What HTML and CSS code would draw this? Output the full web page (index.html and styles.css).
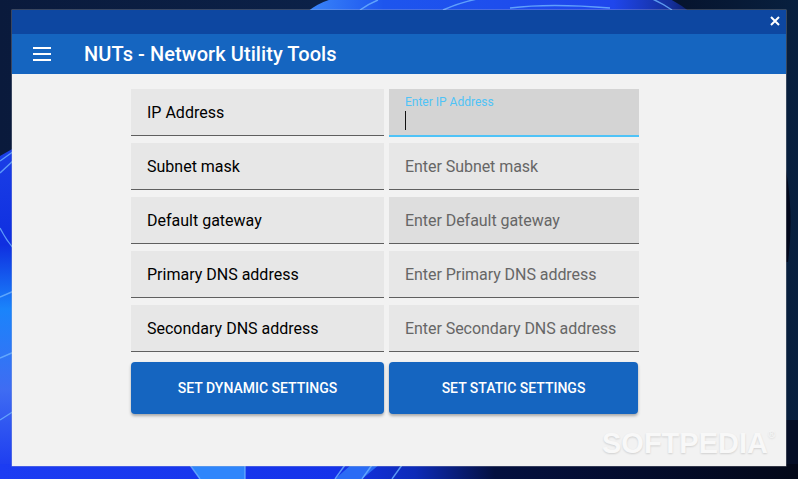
FILE: index.html
```html
<!DOCTYPE html>
<html lang="en">
<head>
<meta charset="utf-8">
<title>NUTs - Network Utility Tools</title>
<link rel="stylesheet" href="styles.css">
</head>
<body>
<svg class="wallpaper" viewBox="0 0 798 479" xmlns="http://www.w3.org/2000/svg" aria-hidden="true">
  <defs>
    <linearGradient id="dark" x1="0" y1="0" x2="1" y2="0">
      <stop offset="0" stop-color="#0a1a3c"/>
      <stop offset="0.4" stop-color="#0b2148"/>
      <stop offset="0.85" stop-color="#06142e"/>
      <stop offset="1" stop-color="#08203f"/>
    </linearGradient>
    <linearGradient id="left" x1="0" y1="0" x2="0" y2="1">
      <stop offset="0" stop-color="#1b3fe6"/>
      <stop offset="0.3" stop-color="#0f2fe0"/>
      <stop offset="0.5" stop-color="#1a84fb"/>
      <stop offset="0.75" stop-color="#3f6cf2"/>
      <stop offset="1" stop-color="#1c3bf0"/>
    </linearGradient>
    <linearGradient id="bottom" x1="0" y1="0" x2="1" y2="0">
      <stop offset="0" stop-color="#1c3cf2"/>
      <stop offset="0.42" stop-color="#1533ea"/>
      <stop offset="0.52" stop-color="#0d2bb8"/>
      <stop offset="0.62" stop-color="#04103f"/>
      <stop offset="1" stop-color="#030818"/>
    </linearGradient>
    <linearGradient id="top" x1="0" y1="0" x2="1" y2="0">
      <stop offset="0" stop-color="#3a86fa"/>
      <stop offset="0.2" stop-color="#1d55ee"/>
      <stop offset="0.8" stop-color="#1f46ec"/>
      <stop offset="0.95" stop-color="#142f9a"/>
      <stop offset="1" stop-color="#0b1f6a"/>
    </linearGradient>
  </defs>
  <rect width="798" height="479" fill="url(#dark)"/>
  <rect x="786" y="420" width="12" height="59" fill="#050e26"/>
  <path d="M786 170 Q794 215 788 262 L786 262 Z" fill="#02081c"/>
  <path d="M0 156 L14 148 V470 H0 Z" fill="url(#left)"/>
  <rect y="464" width="798" height="15" fill="url(#bottom)"/>
  <path d="M190 464 L200 479 H245 V464 Z" fill="#2f86fb"/>
  <path d="M352 464 L335 479 H362 L380 464 Z" fill="#2a6cf5"/>
  <path d="M307 12 Q322 0 338 -2 L668 -2 Q680 4 690 12 Z" fill="url(#top)"/>
  <g class="streak">
    <path d="M0 161 L14 151"/>
    <path d="M0 173 L14 160"/>
    <path d="M0 228 Q6 240 14 249"/>
    <path d="M0 297 L14 291"/>
    <path d="M0 358 L14 352"/>
    <path d="M0 420 L14 411"/>
    <path d="M190 465 L200 479"/>
    <path d="M245 465 V479"/>
    <path d="M345 465 L335 479"/>
    <path d="M372 465 L362 479"/>
    <path d="M402 465 L392 479"/>
    <path d="M360 10 Q368 4 378 0"/>
    <path d="M443 10 Q465 0 490 -3"/>
    <path d="M510 8 Q550 3 610 8"/>
    <path d="M650 -2 Q662 3 672 10"/>
  </g>
</svg>

<main class="window">
  <div class="titlebar">
    <svg class="close-icon" viewBox="0 0 10 10" xmlns="http://www.w3.org/2000/svg" aria-hidden="true">
      <path d="M1 1 L9 9 M9 1 L1 9"/>
    </svg>
  </div>
  <header class="appbar">
    <svg class="menu-icon" viewBox="0 0 18 14" xmlns="http://www.w3.org/2000/svg" aria-hidden="true">
      <path d="M0 1 H18 M0 7 H18 M0 13 H18"/>
    </svg>
    <h1 class="app-title">NUTs - Network Utility Tools</h1>
  </header>
  <section class="content">
    <div class="form">
      <div class="cell label">IP Address</div>
      <div class="cell input focused">
        <span class="float-label">Enter IP Address</span>
        <span class="caret"></span>
      </div>
      <div class="cell label">Subnet mask</div>
      <div class="cell input">Enter Subnet mask</div>
      <div class="cell label">Default gateway</div>
      <div class="cell input hovered">Enter Default gateway</div>
      <div class="cell label">Primary DNS address</div>
      <div class="cell input">Enter Primary DNS address</div>
      <div class="cell label">Secondary DNS address</div>
      <div class="cell input">Enter Secondary DNS address</div>
      <button class="btn btn-left" type="button">SET DYNAMIC SETTINGS</button>
      <button class="btn btn-right" type="button">SET STATIC SETTINGS</button>
    </div>
    <div class="watermark">SOFTPEDIA<sup class="reg">®</sup></div>
  </section>
</main>
</body>
</html>
```

FILE: styles.css
```css
* {
  box-sizing: border-box;
}

html,
body {
  margin: 0;
  height: 100%;
  overflow: hidden;
}

body {
  position: relative;
  width: 798px;
  height: 479px;
  font-family: Roboto, "Liberation Sans", sans-serif;
}

.wallpaper {
  position: absolute;
  inset: 0;
  width: 798px;
  height: 479px;
  display: block;
}

.streak path {
  fill: none;
  stroke: #6fb4ff;
  stroke-width: 1.4;
  opacity: 0.8;
}

.window {
  position: absolute;
  left: 12px;
  top: 10px;
  width: 774px;
  height: 456px;
  display: flex;
  flex-direction: column;
  background: #f2f2f2;
  box-shadow: 0 0 0 0.5px rgba(200, 200, 200, 0.5);
}

.titlebar {
  flex: 0 0 24px;
  display: flex;
  align-items: center;
  justify-content: flex-end;
  padding: 0 6px 2px 0;
  background: #0d47a1;
}

.close-icon {
  width: 10px;
  height: 10px;
  fill: none;
  stroke: #fff;
  stroke-width: 2;
}

.appbar {
  flex: 0 0 40px;
  display: flex;
  align-items: center;
  gap: 33px;
  padding-left: 21px;
  background: #1565c0;
}

.menu-icon {
  flex: none;
  width: 18px;
  height: 14px;
  fill: none;
  stroke: #fff;
  stroke-width: 2;
}

.app-title {
  margin: 0;
  font-size: 20px;
  font-weight: 500;
  letter-spacing: 0.07px;
  line-height: 40px;
  color: #fff;
}

.content {
  position: relative;
  flex: 1;
  padding: 15px 0 0 119px;
}

.form {
  display: grid;
  grid-template-columns: 253px 250px;
  grid-auto-rows: 47px;
  column-gap: 5px;
  row-gap: 7px;
  width: max-content;
}

.cell {
  display: flex;
  align-items: center;
  padding: 0 16px;
  font-size: 16px;
  background: #e7e7e7;
  border-bottom: 1px solid #5f5f5f;
}

.label {
  color: #000;
}

.input {
  color: #666;
  letter-spacing: -0.05px;
}

.hovered {
  background: #dedede;
}

.focused {
  position: relative;
  background: #d4d4d4;
  border-bottom: 2px solid #4fc3f7;
  height: 48px;
  margin-bottom: -1px;
}

.float-label {
  position: absolute;
  left: 16px;
  top: 6px;
  font-size: 12px;
  line-height: 14px;
  letter-spacing: 0;
  color: #4fc3f7;
}

.caret {
  position: absolute;
  left: 16px;
  top: 22px;
  width: 1px;
  height: 19px;
  background: #111;
}

.btn {
  height: 52px;
  margin-top: 3px;
  border: 0;
  border-radius: 4px;
  padding: 0;
  font-family: inherit;
  font-size: 14px;
  font-weight: 500;
  color: #fff;
  background: #1565c0;
  box-shadow: 0 2px 3px rgba(0, 0, 0, 0.3);
}

.btn-right {
  width: 249px;
}

.watermark {
  position: absolute;
  left: 590px;
  top: 352px;
  font-family: "Liberation Sans", sans-serif;
  font-size: 29px;
  font-weight: 700;
  line-height: 34px;
  white-space: nowrap;
  color: #f8f8f8;
  text-shadow: 0 1px 2px rgba(0, 0, 0, 0.14);
}

.reg {
  font-size: 10px;
  font-weight: 400;
  vertical-align: 15px;
  line-height: 0;
}
```
